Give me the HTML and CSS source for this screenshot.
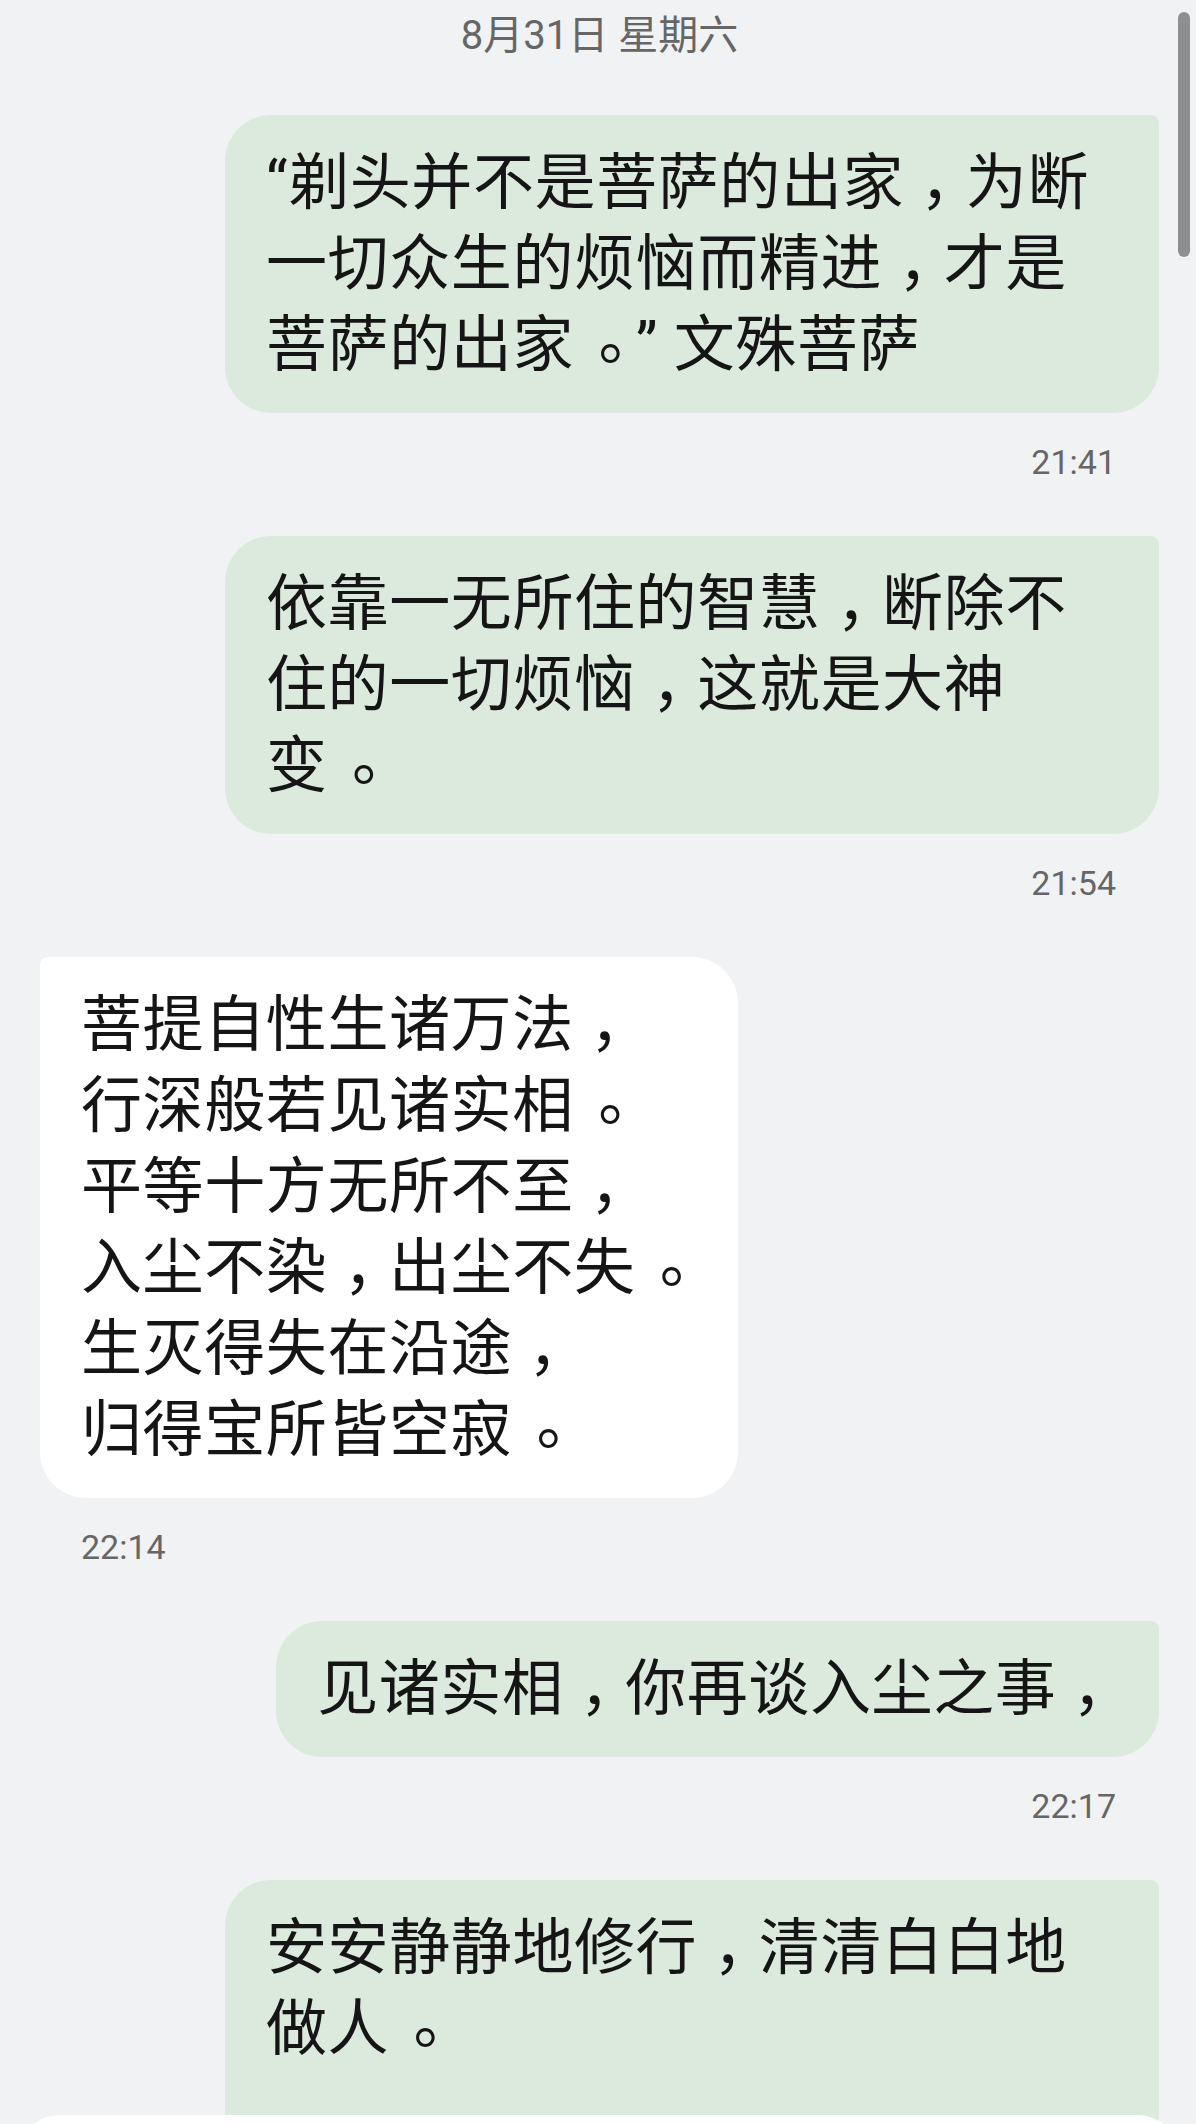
FILE: index.html
```html
<!DOCTYPE html>
<html lang="zh-CN">
<head>
    <meta charset="UTF-8">
    <title>聊天记录</title>
<link rel="stylesheet" href="styles.css">
</head>
<body>

<div class="chat">
    <div class="date">8月31日 星期六</div>

    <div class="msg out">
        <div class="bubble wide">“剃头并不是菩萨的出家<span class="cm">，</span>为断<br>一切众生的烦恼而精进<span class="cm">，</span>才是<br>菩萨的出家<span class="st">。</span>” 文殊菩萨</div>
        <div class="time">21:41</div>
    </div>

    <div class="msg out">
        <div class="bubble wide">依靠一无所住的智慧<span class="cm">，</span>断除不<br>住的一切烦恼<span class="cm">，</span>这就是大神<br>变<span class="st">。</span></div>
        <div class="time">21:54</div>
    </div>

    <div class="msg in">
        <div class="bubble">菩提自性生诸万法<span class="cm">，</span><br>行深般若见诸实相<span class="st">。</span><br>平等十方无所不至<span class="cm">，</span><br>入尘不染<span class="cm">，</span>出尘不失<span class="st">。</span><br>生灭得失在沿途<span class="cm">，</span><br>归得宝所皆空寂<span class="st">。</span></div>
        <div class="time">22:14</div>
    </div>

    <div class="msg out">
        <div class="bubble">见诸实相<span class="cm">，</span>你再谈入尘之事<span class="cm">，</span></div>
        <div class="time">22:17</div>
    </div>

    <div class="msg out">
        <div class="bubble wide last">安安静静地修行<span class="cm">，</span>清清白白地<br>做人<span class="st">。</span></div>
    </div>
</div>

<!-- bottom sheet peeking in at the bottom edge -->
<div class="sheet"></div>
<div class="scrollbar"></div>

</body>
</html>
```

FILE: styles.css
```css
html, body {
    margin: 0;
    padding: 0;
}

body {
    width: 1196px;
    height: 2124px;
    overflow: hidden;
    background: #f1f2f4;
    font-family: Roboto, "Noto Sans CJK SC", sans-serif;
    color: #151515;
}

.chat {
    display: flex;
    flex-direction: column;
    padding: 0 37px 0 40px;
}

.date {
    margin: 12px 0 55px 0;
    text-align: center;
    font-size: 40px;
    line-height: 48px;
    color: #666666;
}

.msg {
    display: flex;
    flex-direction: column;
}

.msg.out {
    align-items: flex-end;
}

.msg.in {
    align-items: flex-start;
}

.bubble {
    padding: 28px 41px 27px 41px;
    font-size: 61px;
    letter-spacing: 0.6px;
    line-height: 81px;
    white-space: nowrap;
    text-spacing-trim: space-all;
    box-sizing: border-box;
}

/* the phone font sets full-width punctuation nearer the middle of the cell:
   push the glyph right, keep the cell one em wide */
.cm {
    padding-left: 0.26em;
    letter-spacing: -0.25em;
}

.st {
    padding-left: 0.4em;
    letter-spacing: -0.39em;
    line-height: 60px;
    vertical-align: 0.12em;
}

.out .bubble {
    background: #dceadd;
    border-radius: 46px 8px 46px 46px;
}

.in .bubble {
    background: #ffffff;
    border-radius: 8px 46px 46px 46px;
}

.bubble.wide {
    width: 934px;
}

.bubble.last {
    padding-bottom: 90px;
}

.time {
    margin: 29px 0 54px 0;
    font-size: 34px;
    line-height: 40px;
    color: #666666;
}

.out .time {
    margin-right: 43px;
}

.in .time {
    margin-left: 41px;
}

.sheet {
    position: fixed;
    left: 19px;
    right: 18px;
    top: 2115px;
    height: 60px;
    background: #ffffff;
    border-radius: 40px 40px 0 0;
}

.scrollbar {
    position: fixed;
    top: 12px;
    right: 6px;
    width: 12px;
    height: 245px;
    border-radius: 6px;
    background: #8f8f92;
}
```
